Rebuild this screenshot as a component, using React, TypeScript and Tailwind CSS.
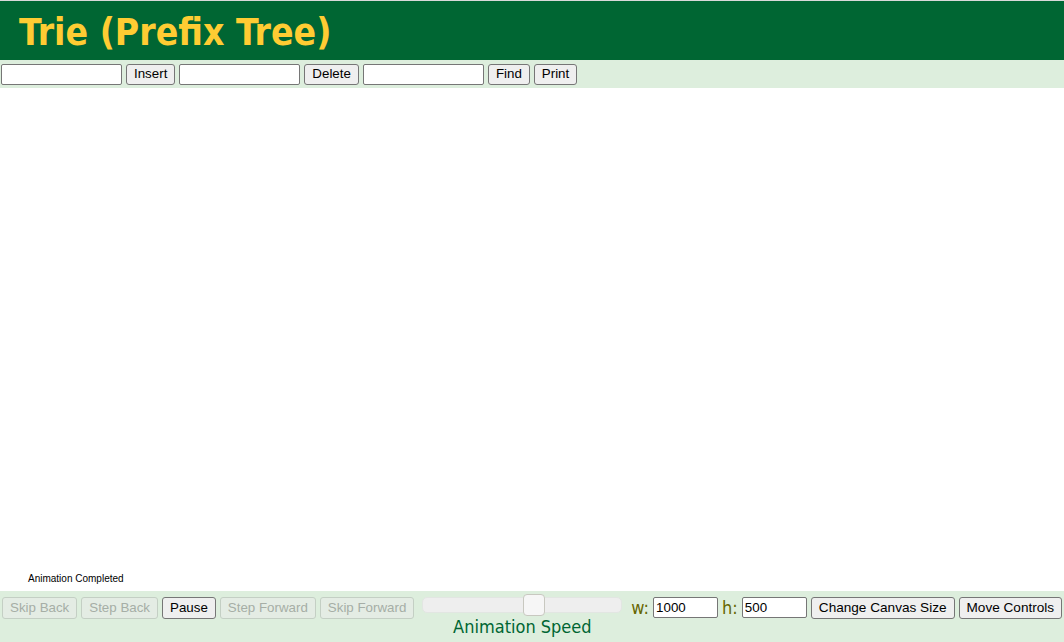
const BTN =
  "shrink-0 whitespace-nowrap h-[21px] px-[7px] bg-[#efefef] border border-[#767676] rounded-[3px] text-[13.33px] leading-none text-black";
const BTN_LG =
  "shrink-0 whitespace-nowrap h-[22px] px-[7px] bg-[#efefef] border border-[#767676] rounded-[3px] text-[13.6px] leading-none text-black";
const BTN_ON =
  "shrink-0 whitespace-nowrap h-[22px] px-[7px] bg-[#efefef] border border-[#767676] rounded-[3px] text-[13.33px] leading-none text-black";
const BTN_OFF =
  "shrink-0 whitespace-nowrap h-[22px] px-[7px] bg-[#e4ece4] border border-[#c4cfc4] rounded-[3px] text-[13.33px] leading-none text-[#a6aea6]";
const INPUT = "shrink-0 h-[21px] w-[121px] bg-white border border-[#767676] rounded-[2px] px-[2px] text-[13.33px]";
const SMALL_INPUT = "shrink-0 h-[21px] w-[65px] bg-white border border-[#767676] rounded-[2px] px-[2px] text-[13.33px]";
const TAHOMA = { fontFamily: '"DejaVu Sans Condensed", "DejaVu Sans", Verdana, sans-serif' };

export default function App() {
  return (
    <div
      className="w-full h-[642px] flex flex-col border-t border-[#d9d9d9] overflow-hidden"
      style={{ fontFamily: '"Liberation Sans", Arial, sans-serif' }}
    >
      <div className="h-[59px] shrink-0 bg-[#006633] flex items-center pl-[19px] pt-[3px]">
        <h1 className="text-[37px] font-bold text-[#ffcc33] leading-none" style={TAHOMA}>
          Trie (Prefix Tree)
        </h1>
      </div>

      <div className="h-[28px] shrink-0 bg-[#ddeedd] flex items-center gap-[4px] pl-[1px]">
        <input className={INPUT} />
        <button className={BTN}>Insert</button>
        <input className={INPUT} />
        <button className={BTN}>Delete</button>
        <input className={INPUT} />
        <button className={BTN}>Find</button>
        <button className={BTN}>Print</button>
      </div>

      <div className="flex-1 bg-white flex flex-col justify-end pl-[28px] pb-[5px]">
        <span className="text-[10px] text-black">Animation Completed</span>
      </div>

      <div className="h-[51px] shrink-0 bg-[#ddeedd] flex items-start gap-[4px] pl-[2px] pt-[6px]">
        <button className={BTN_OFF} disabled>Skip Back</button>
        <button className={BTN_OFF} disabled>Step Back</button>
        <button className={BTN_ON}>Pause</button>
        <button className={BTN_OFF} disabled>Step Forward</button>
        <button className={BTN_OFF} disabled>Skip Forward</button>

        <div className="shrink-0 flex flex-col items-center w-[200px] ml-[4px]">
          <div className="relative w-[200px] h-[16px] rounded-[5px] bg-[#eeeeee] border border-[#e2e6e2]">
            <div className="absolute left-[100px] top-[-4px] w-[22px] h-[22px] rounded-[4px] bg-[#f6f6f6] border border-[#c8c8c0]" />
          </div>
          <span className="mt-[5px] text-[18px] text-[#006633] leading-none whitespace-nowrap" style={TAHOMA}>
            Animation Speed
          </span>
        </div>

        <span className="shrink-0 ml-[5px] text-[18px] leading-[22px] text-[#666600]" style={TAHOMA}>
          w:
        </span>
        <input className={SMALL_INPUT} defaultValue="1000" />
        <span className="shrink-0 text-[18px] leading-[22px] text-[#666600]" style={TAHOMA}>
          h:
        </span>
        <input className={SMALL_INPUT} defaultValue="500" />
        <button className={BTN_LG}>Change Canvas Size</button>
        <button className={BTN_LG}>Move Controls</button>
      </div>
    </div>
  );
}
